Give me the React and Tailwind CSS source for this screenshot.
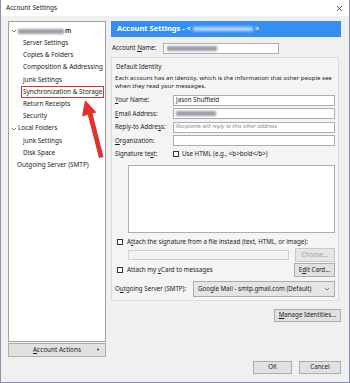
import React from "react";

const tree = [
  { label: "Server Settings", indent: "pl-[14px]" },
  { label: "Copies & Folders", indent: "pl-[14px]" },
  { label: "Composition & Addressing", indent: "pl-[14px]" },
  { label: "Junk Settings", indent: "pl-[14px]" },
  { label: "Synchronization & Storage", indent: "pl-[14px]", marked: true },
  { label: "Return Receipts", indent: "pl-[14px]" },
  { label: "Security", indent: "pl-[14px]" },
];

function Blur({ w }) {
  return <span className={`inline-block h-[5px] ${w} bg-[#9a9ea8] blur-[1.2px] align-middle`} />;
}

function Chevron() {
  return (
    <svg width="6" height="6" viewBox="0 0 6 6" className="shrink-0">
      <path d="M1 2 L3 4 L5 2" fill="none" stroke="#555" strokeWidth="0.8" />
    </svg>
  );
}

function Box() {
  return <span className="inline-block w-[6px] h-[6px] border border-[#333] bg-white shrink-0" />;
}

function Field({ label, children }) {
  return (
    <div className="flex items-center h-[12px] mb-[1.5px]">
      <span className="w-[58px] shrink-0">{label}</span>
      <div className="flex-1 h-[11px] bg-white border border-[#abadb3] flex items-center px-[2px] overflow-hidden whitespace-nowrap">
        {children}
      </div>
    </div>
  );
}

function Btn({ children, className = "" }) {
  return (
    <div className={`h-[13px] bg-[#e1e1e1] border border-[#adadad] flex items-center justify-center ${className}`}>
      {children}
    </div>
  );
}

export default function App() {
  return (
    <div className="relative w-[350px] h-[383px] bg-[#f0f0f0] border-x border-b border-[#8a90ad] text-[6.2px] leading-none text-[#1a1a1a] font-['Segoe_UI','Noto_Sans',sans-serif] overflow-hidden">
      {/* Title bar */}
      <div className="h-[16px] bg-white flex items-center justify-between pl-[5px] pr-[6px]">
        <span className="text-[6.5px]">Account Settings</span>
        <svg width="7" height="7" viewBox="0 0 7 7">
          <path d="M1 1 L6 6 M6 1 L1 6" stroke="#333" strokeWidth="0.8" />
        </svg>
      </div>

      <div className="flex h-[341px] pt-[5px] pl-[7px]">
        {/* Left column */}
        <div className="w-[98px] flex flex-col text-[6.4px]">
          <div className="h-[321px] bg-white border border-[#a0a0a0] pt-[3px]">
            <div className="flex items-center h-[12.2px] pl-[2px] gap-[1px]">
              <Chevron />
              <Blur w="w-[46px]" />
              <span className="text-[6.5px] font-semibold">m</span>
            </div>
            {tree.map((t) => (
              <div key={t.label} className={`flex items-center h-[12.2px] ${t.indent}`}>
                <span
                  className={
                    t.marked
                      ? "border border-[#d6322c] px-[1px] py-[2px] -ml-[2px] whitespace-nowrap"
                      : "whitespace-nowrap"
                  }
                >
                  {t.label}
                </span>
              </div>
            ))}
            <div className="flex items-center h-[12.2px] pl-[2px] gap-[1px]">
              <Chevron />
              <span>Local Folders</span>
            </div>
            <div className="flex items-center h-[12.2px] pl-[14px]">Junk Settings</div>
            <div className="flex items-center h-[12.2px] pl-[14px]">Disk Space</div>
            <div className="flex items-center h-[12.2px] pl-[8px]">Outgoing Server (SMTP)</div>
          </div>
          <Btn className="mt-[1px] h-[14px] relative">
            <span>
              <span className="underline">A</span>ccount Actions
            </span>
            <span className="absolute right-[5px] text-[4px]">▼</span>
          </Btn>
        </div>

        {/* Right column */}
        <div className="w-[230px] ml-[5px] flex flex-col">
          <div className="h-[16px] bg-[#348ff0] text-white font-bold text-[7.5px] flex items-center pl-[6px] gap-[2px]">
            <span>Account Settings - &lt;</span>
            <span className="inline-block h-[4px] w-[60px] bg-[#c9def8] blur-[1.5px]" />
            <span>&gt;</span>
          </div>

          <div className="flex items-center h-[12px] mt-[5px] pl-[1px]">
            <span className="w-[51px]">
              Account <span className="underline">N</span>ame:
            </span>
            <div className="w-[116px] h-[11px] bg-white border border-[#abadb3] flex items-center px-[3px]">
              <Blur w="w-[50px]" />
            </div>
          </div>

          <div className="mt-[3px] w-[228px] h-[244px] border border-[#dcdcdc] bg-[#f4f4f4] px-[3px] pt-[6px]">
            <div className="pl-[1px]">Default Identity</div>
            <div className="mt-[4px] leading-[8px] whitespace-nowrap text-[6.1px]">
              Each account has an identity, which is the information that other people see
              <br />
              when they read your messages.
            </div>
            <div className="mt-[4px]">
              <Field label={<><span className="underline">Y</span>our Name:</>}>Jason Shuffield</Field>
              <Field label={<><span className="underline">E</span>mail Address:</>}>
                <Blur w="w-[40px]" />
              </Field>
              <Field label={<>Reply-to Addre<span className="underline">s</span>s:</>}>
                <span className="italic text-[#8c8c8c] text-[5.6px]">Recipients will reply to this other address</span>
              </Field>
              <Field label={<><span className="underline">O</span>rganization:</>}>{""}</Field>
            </div>
            <div className="flex items-center h-[12px] mt-[1px]">
              <span className="w-[58px]">
                Signature te<span className="underline">x</span>t:
              </span>
              <Box />
              <span className="ml-[3px]">
                Use HTML (e.g., &lt;b&gt;bold&lt;/b&gt;)
              </span>
            </div>
            <div className="ml-[13px] mt-[5px] h-[68px] bg-white border border-[#abadb3]" />
            <div className="flex items-center h-[10px] mt-[4px] pl-[2px]">
              <Box />
              <span className="ml-[4px] whitespace-nowrap">
                A<span className="underline">t</span>tach the signature from a file instead (text, HTML, or image):
              </span>
            </div>
            <div className="flex items-center mt-[1px] ml-[13px] gap-[6px]">
              <div className="w-[164px] h-[10px] bg-[#f2f2f2] border border-[#d0d0d0]" />
              <div className="w-[41px] h-[14px] bg-[#e6e6e6] border border-[#c8c8c8] flex items-center justify-center text-[#a0a0a0]">
                Choose...
              </div>
            </div>
            <div className="flex items-center h-[14px] mt-[1px] pl-[2px]">
              <Box />
              <span className="ml-[4px]">
                Attach my <span className="underline">v</span>Card to messages
              </span>
              <Btn className="ml-auto w-[41px] h-[14px]">
                E<span className="underline">d</span>it Card...
              </Btn>
            </div>
            <div className="flex items-center h-[16px] mt-[4px]">
              <span className="w-[78px] whitespace-nowrap">
                O<span className="underline">u</span>tgoing Server (SMTP):
              </span>
              <div className="flex-1 h-[16px] bg-[#e5e5e5] border border-[#acacac] flex items-center pl-[4px] pr-[4px] whitespace-nowrap">
                <span>Google Mail - smtp.gmail.com (Default)</span>
                <svg width="6" height="6" viewBox="0 0 6 6" className="ml-auto">
                  <path d="M1 2 L3 4 L5 2" fill="none" stroke="#666" strokeWidth="0.8" />
                </svg>
              </div>
            </div>
          </div>

          <div className="flex justify-end mt-[8px]">
            <Btn className="w-[67px] h-[13px]">
              <span>
                <span className="underline">M</span>anage Identities...
              </span>
            </Btn>
          </div>
        </div>
      </div>

      {/* Footer */}
      <div className="flex justify-end gap-[7px] pr-[8px] mt-[4px]">
        <Btn className="w-[39px] h-[13px] border-[#0078d7]">OK</Btn>
        <Btn className="w-[42px] h-[13px]">Cancel</Btn>
      </div>

      {/* Red annotation arrow */}
      <svg className="absolute left-0 top-0 pointer-events-none" width="350" height="383" viewBox="0 0 350 383">
        <path d="M84 100 L95.5 112.5 L91.5 113.5 L102.5 157 L98 158 L86.8 114.8 L81 116.5 Z" fill="#e0312b" />
      </svg>
    </div>
  );
}
